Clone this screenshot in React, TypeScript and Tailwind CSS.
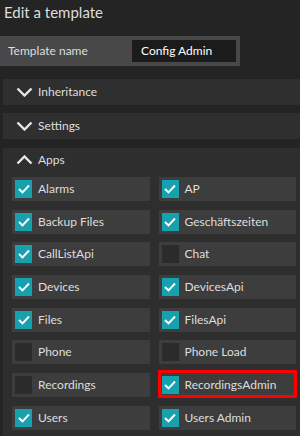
import React from "react";

const apps: [string, boolean][] = [
  ["Alarms", true],
  ["AP", true],
  ["Backup Files", true],
  ["Geschäftszeiten", true],
  ["CallListApi", true],
  ["Chat", false],
  ["Devices", true],
  ["DevicesApi", true],
  ["Files", true],
  ["FilesApi", true],
  ["Phone", false],
  ["Phone Load", false],
  ["Recordings", false],
  ["RecordingsAdmin", true],
  ["Users", true],
  ["Users Admin", true],
];

function Chevron({ up }: { up?: boolean }) {
  return (
    <svg width="17" height="10" viewBox="0 0 17 10" className="shrink-0">
      <polyline
        points={up ? "1.5,8.5 8.5,1.5 15.5,8.5" : "1.5,1.5 8.5,8.5 15.5,1.5"}
        fill="none"
        stroke="#e6e6e6"
        strokeWidth="2.4"
      />
    </svg>
  );
}

function Check() {
  return (
    <svg width="12" height="10" viewBox="0 0 12 10">
      <polyline points="1,5 4.5,8.5 11,1.5" fill="none" stroke="#ffffff" strokeWidth="1.9" />
    </svg>
  );
}

export default function App() {
  return (
    <div className="w-[300px] h-[436px] overflow-hidden bg-[#242424] text-[#dedede] font-['Lato',sans-serif]">
      {/* HEADER */}
      <div className="h-6 pl-1 text-[15px] leading-6">Edit a template</div>

      <div className="mt-3 w-[240px] h-[30px] bg-[#484848] flex items-center pl-2 pr-1">
        <span className="text-[12px] flex-1">Template name</span>
        <div className="w-[104px] h-[22px] bg-[#1b1b1b] text-[12px] text-white pl-[9px] flex items-center">
          Config Admin
        </div>
      </div>

      {/* ACCORDIONS */}
      <div className="mt-[13px] ml-[3px] flex flex-col">
        <div className="h-[26px] bg-[#2f2f2f] flex items-center gap-[5px] pl-[13px] text-[12px]">
          <Chevron />
          Inheritance
        </div>
        <div className="mt-2 h-[26px] bg-[#2f2f2f] flex items-center gap-[5px] pl-[13px] text-[12px]">
          <Chevron />
          Settings
        </div>

        <div className="mt-[9px] bg-[#2e2e2e] h-[300px]">
          <div className="h-6 flex items-center gap-[5px] pl-[13px] text-[12px]">
            <Chevron up />
            Apps
          </div>
          <div className="grid grid-cols-2 gap-x-[9px] gap-y-[8.7px] pl-[9px] pr-[4px] pt-[5px]">
            {apps.map(([name, on]) => (
              <div key={name} className="relative h-6 bg-[#3d3d3d] flex items-center pl-[3px] gap-[6px] text-[12px]">
                {on ? (
                  <div className="w-[17px] h-[18px] bg-[#17a0ad] flex items-center justify-center">
                    <Check />
                  </div>
                ) : (
                  <div className="w-[17px] h-[18px] bg-[#2b2b2b]" />
                )}
                {name}
                {name === "RecordingsAdmin" && (
                  <div className="absolute -top-[3px] -left-px -right-px -bottom-px border-[3px] border-[#ff0000]" />
                )}
              </div>
            ))}
          </div>
        </div>
      </div>
    </div>
  );
}
